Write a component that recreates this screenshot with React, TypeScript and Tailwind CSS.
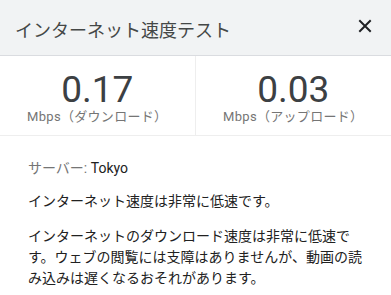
import React from 'react';

const font = { fontFamily: 'Roboto, "Noto Sans CJK JP", sans-serif' };

const Stat: React.FC<{ value: string; label: string; divider?: boolean }> = ({ value, label, divider }) => (
  <div className={`flex flex-col items-center pt-[15px] ${divider ? 'border-r border-[#eeeeee]' : ''}`}>
    <div className="text-[37px] leading-[37px] text-[#3c4043]">{value}</div>
    <div className="mt-[1px] text-[13px] leading-[16px] tracking-[0.3px] text-[#757575]">{label}</div>
  </div>
);

export default function App() {
  return (
    <div className="w-[391px] h-[295px] bg-white overflow-hidden" style={font}>
      <div className="h-[56px] flex items-center justify-between pl-[15px] pr-[19px] bg-[#f1f3f4] border-b border-[#dadce0]">
        <span className="text-[18px] text-[#444746] mt-[5px]">インターネット速度テスト</span>
        <svg width="14" height="14" viewBox="0 0 14 14" className="mt-[-3px]">
          <path d="M2 2 L12 12 M12 2 L2 12" stroke="#202124" strokeWidth="2" strokeLinecap="square" />
        </svg>
      </div>

      <div className="grid grid-cols-2 h-[80px] border-b border-[#eeeeee]">
        <Stat value="0.17" label="Mbps（ダウンロード）" divider />
        <Stat value="0.03" label="Mbps（アップロード）" />
      </div>

      <div className="pl-7 pr-6 pt-[22px] text-[14px] leading-[21px] text-[#212121]">
        <p>
          <span className="text-[#757575]">サーバー: </span>Tokyo
        </p>
        <p className="mt-[12px]">インターネット速度は非常に低速です。</p>
        <p className="mt-[14px]">
          インターネットのダウンロード速度は非常に低速です。ウェブの閲覧には支障はありませんが、動画の読み込みは遅くなるおそれがあります。
        </p>
      </div>
    </div>
  );
}
